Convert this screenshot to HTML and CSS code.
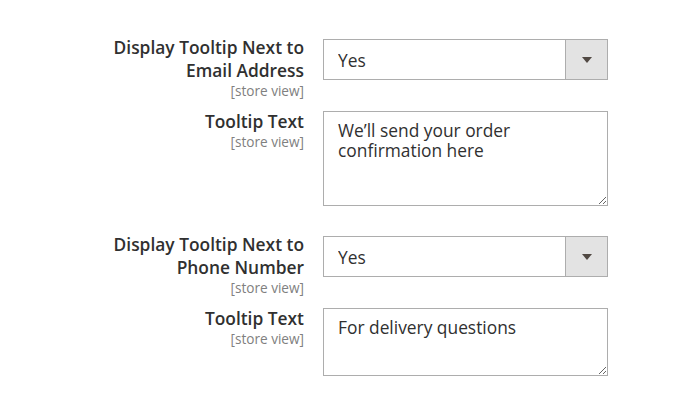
FILE: index.html
```html
<!DOCTYPE html>
<html lang="en">
<head>
  <meta charset="utf-8" />
  <title>Tooltip Settings</title>
  <link rel="stylesheet" href="styles.css">
</head>
<body>
  <form class="config">
    <div class="row row-select">
      <label class="label" for="email-tooltip">
        <span>Display Tooltip Next to Email Address</span>
        <span class="scope">[store view]</span>
      </label>
      <div class="select-wrap">
        <select id="email-tooltip">
          <option>Yes</option>
          <option>No</option>
        </select>
        <span class="select-btn"><i class="arrow"></i></span>
      </div>
    </div>

    <div class="row row-text">
      <label class="label" for="email-text">
        <span>Tooltip Text</span>
        <span class="scope">[store view]</span>
      </label>
      <textarea id="email-text" class="tall">We’ll send your order confirmation here</textarea>
    </div>

    <div class="row row-select">
      <label class="label" for="phone-tooltip">
        <span>Display Tooltip Next to Phone Number</span>
        <span class="scope">[store view]</span>
      </label>
      <div class="select-wrap">
        <select id="phone-tooltip">
          <option>Yes</option>
          <option>No</option>
        </select>
        <span class="select-btn"><i class="arrow"></i></span>
      </div>
    </div>

    <div class="row row-text">
      <label class="label" for="phone-text">
        <span>Tooltip Text</span>
        <span class="scope">[store view]</span>
      </label>
      <textarea id="phone-text" class="short">For delivery questions</textarea>
    </div>
  </form>
</body>
</html>
```

FILE: styles.css
```css
html,
body {
  margin: 0;
  padding: 0;
  background: #fff;
  font-family: 'Open Sans', sans-serif;
  color: #303030;
}

.config {
  padding-top: 36px;
}

.row {
  display: grid;
  grid-template-columns: 304px 285px;
  column-gap: 19px;
  align-items: start;
}

.row-select {
  margin-bottom: 12px;
}

.row-text {
  margin-bottom: 27px;
}

.label {
  display: flex;
  flex-direction: column;
  align-items: flex-end;
  text-align: right;
  font-size: 17.36px;
  font-weight: 600;
  line-height: 23px;
  padding-left: 90px;
}

.row-text .label {
  margin-top: -1px;
}

.scope {
  font-size: 13.6px;
  font-weight: 400;
  line-height: 17px;
  color: #808080;
}

.select-wrap {
  display: flex;
  height: 41px;
  margin-top: 3px;
  border: 1px solid #adadad;
  box-sizing: border-box;
}

.select-wrap select {
  flex: 1;
  border: 0;
  padding: 0 14px;
  background: #fff;
  font-family: 'Open Sans', sans-serif;
  font-size: 17.36px;
  color: #303030;
  outline: none;
  -webkit-appearance: none;
  appearance: none;
}

.select-btn {
  display: flex;
  align-items: center;
  justify-content: center;
  width: 41px;
  border-left: 1px solid #adadad;
  background: #e3e3e3;
}

.arrow {
  width: 0;
  height: 0;
  border-left: 5px solid transparent;
  border-right: 5px solid transparent;
  border-top: 6px solid #514943;
}

textarea {
  display: block;
  width: 285px;
  padding: 8px 14px;
  border: 1px solid #adadad;
  box-sizing: border-box;
  font-family: 'Open Sans', sans-serif;
  font-size: 17.36px;
  line-height: 20px;
  color: #303030;
  resize: vertical;
  outline: none;
}

.tall {
  height: 95px;
}

.short {
  height: 68px;
}
```
